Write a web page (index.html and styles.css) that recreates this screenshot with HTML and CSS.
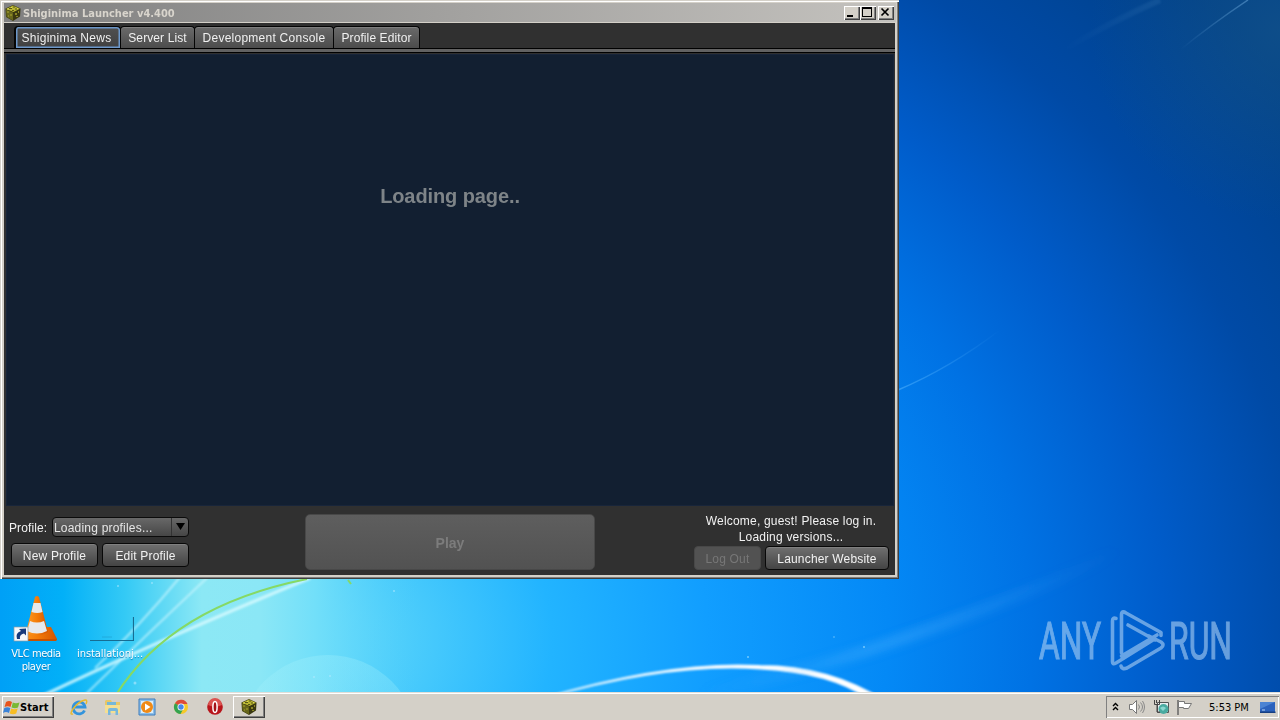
FILE: index.html
```html
<!DOCTYPE html>
<html lang="en">
<head>
<meta charset="utf-8">
<title>Shiginima Launcher v4.400</title>
<link rel="stylesheet" href="styles.css">
</head>
<body>
<svg width="0" height="0" class="defs">
  <defs>
    <symbol id="cube" viewBox="0 0 16 16">
      <path d="M8 0 15.500 3.500 15 11.500 8 16 1 12 .5 3.500z" fill="#3a3810"/>
      <path d="M8 .5 15 3.700 8.500 7 1 4z" fill="#b8b432"/>
      <path d="M1 4.500 8 7.500V15.500L1.500 11.800z" fill="#67661c"/>
      <path d="M4 3h3v1H4zM8 1.500h2v1H8zM10 3.500h2v1h-2zM7 5h2v1H7z" fill="#5a5a18"/>
      <path d="M2 6h2v2H2zM5 9h2v2H5zM3 10h1v2H3zM10 8h2v2h-2zM13 6h1v2h-1zM11 11h2v1h-2z" fill="#8a8724"/>
      <path d="M2 3.500h2v1H2zM6 2h1v1H6zM12 3h1v1h-1z" fill="#dedb50"/>
    </symbol>
  </defs>
</svg>
<main class="desktop">
  <svg class="wallpaper" viewBox="0 0 1280 720">
    <defs>
      <radialGradient id="sky" gradientUnits="userSpaceOnUse" cx="0" cy="0" r="1.200" gradientTransform="translate(300 640) scale(1000 820)">
        <stop offset="0" stop-color="#6fdffa"/><stop offset=".08" stop-color="#50cffb"/>
        <stop offset=".21" stop-color="#22b4ff"/><stop offset=".34" stop-color="#119eff"/>
        <stop offset=".49" stop-color="#0489f6"/><stop offset=".61" stop-color="#0072e4"/>
        <stop offset=".72" stop-color="#005cca"/><stop offset=".84" stop-color="#004aa6"/>
        <stop offset="1" stop-color="#004088"/>
      </radialGradient>
      <linearGradient id="left" gradientUnits="userSpaceOnUse" x1="0" y1="640" x2="420" y2="640">
        <stop offset="0" stop-color="#00a0f6"/><stop offset=".15" stop-color="#02b0f8"/>
        <stop offset=".3" stop-color="#35caf5"/><stop offset=".48" stop-color="#8ce8f5"/>
        <stop offset=".62" stop-color="#8be7f6"/><stop offset=".75" stop-color="#72dff9"/>
        <stop offset="1" stop-color="#48cbfc" stop-opacity="0"/>
      </linearGradient>
      <radialGradient id="corner"><stop offset="0" stop-color="#1b5a8a" stop-opacity=".5"/><stop offset="1" stop-color="#1b5a8a" stop-opacity="0"/></radialGradient>
      <linearGradient id="beam" x1="0" x2="1"><stop offset="0" stop-color="#5ab8ff" stop-opacity="0"/><stop offset=".4" stop-color="#5ab8ff" stop-opacity=".3"/><stop offset="1" stop-color="#5ab8ff" stop-opacity="0"/></linearGradient>
      <linearGradient id="streak" gradientUnits="userSpaceOnUse" x1="900" y1="0" x2="1000" y2="0"><stop offset="0" stop-color="#5ab8ff" stop-opacity=".5"/><stop offset="1" stop-color="#5ab8ff" stop-opacity="0"/></linearGradient>
      <linearGradient id="ray" x1="1" x2="0"><stop offset="0" stop-color="#5e9bd0" stop-opacity=".6"/><stop offset="1" stop-color="#5e9bd0" stop-opacity="0"/></linearGradient>
      <linearGradient id="arc" gradientUnits="userSpaceOnUse" x1="545" y1="0" x2="780" y2="0"><stop offset="0" stop-color="#fff" stop-opacity=".55"/><stop offset="1" stop-color="#fff"/></linearGradient>
      <linearGradient id="bubble" x1="0" y1="0" x2="0" y2="1"><stop offset="0" stop-color="#a6f2fc" stop-opacity=".3"/><stop offset="1" stop-color="#a6f2fc" stop-opacity=".1"/></linearGradient>
      <filter id="soft" x="-20%" y="-50%" width="140%" height="200%"><feGaussianBlur stdDeviation="1"/></filter>
      <filter id="haze" x="-20%" y="-50%" width="140%" height="200%"><feGaussianBlur stdDeviation="5"/></filter>
    </defs>
    <rect width="1280" height="720" fill="url(#sky)"/>
    <rect width="420" height="720" fill="url(#left)"/>
    <circle cx="1280" cy="30" r="190" fill="url(#corner)"/>
    <circle cx="328" cy="745" r="90" fill="url(#bubble)"/>
    <g fill="none" filter="url(#soft)">
      <path d="M310 578Q155 642 42 696" stroke="#d9fbff" stroke-width="3.500" opacity=".8"/>
      <path d="M209 576Q145 636 84 696M181 576Q138 628 95 668" stroke="#d0f8ff" stroke-width="2" opacity=".65"/>
      <path d="M545 698Q670 662 760 668.500Q830 672 868 698L886 702Q830 666 760 666Q670 661 545 697.500z" stroke="url(#arc)" fill="#fff" stroke-width="2"/>
    </g>
    <path d="M307 579Q172 606 116 695" fill="none" stroke="#86d964" stroke-width="2.200"/>
    <path d="M348 580l3 4" stroke="#86d964" stroke-width="2"/>
    <path d="M700 694Q930 645 1120 550" fill="none" stroke="url(#beam)" stroke-width="10" filter="url(#haze)"/>
    <path d="M800 672Q930 630 1070 570" fill="none" stroke="url(#beam)" stroke-width="4" filter="url(#haze)"/>
    <path d="M898 390Q950 368 1000 330" fill="none" stroke="url(#streak)" stroke-width="1.500"/>
    <path d="M1248 0Q1212 24 1180 50" fill="none" stroke="url(#ray)" stroke-width="1.500"/>
    <path d="M1160 0Q1110 22 1060 52" fill="none" stroke="url(#ray)" stroke-width="6" opacity=".25" filter="url(#soft)"/>
    <g fill="#b7eaff" opacity=".6"><circle cx="864" cy="647" r="1"/><circle cx="748" cy="657" r="1"/><circle cx="834" cy="637" r=".8"/><circle cx="314" cy="677" r="1"/><circle cx="330" cy="676" r="1"/><circle cx="118" cy="586" r="1"/><circle cx="152" cy="583" r="1"/><circle cx="135" cy="683" r="1.500"/><circle cx="394" cy="591" r="1"/></g>
    <g class="watermark">
      <text x="1039" y="659" textLength="62" lengthAdjust="spacingAndGlyphs">ANY</text>
      <text x="1169" y="659" textLength="63" lengthAdjust="spacingAndGlyphs">RUN</text>
      <path d="M1116 618.500Q1112.500 617 1112.500 621V662Q1112.500 665 1116 663L1153 640M1121.500 653V615Q1121.500 610 1126 613L1161 632.500V635.500M1128 625 1155 640M1121.500 656 1157 635M1121 666Q1122 670 1127 668L1161 648Q1165 645 1161 642L1149 636"/>
    </g>
  </svg>

  <div class="shortcut vlc">
    <svg width="48" height="48" viewBox="0 0 48 48">
      <defs><linearGradient id="org" x1="0" x2="1"><stop offset="0" stop-color="#ff9c24"/><stop offset=".5" stop-color="#f47c08"/><stop offset="1" stop-color="#d45400"/></linearGradient></defs>
      <path d="M14 32h25l6 12-1 2H8L6 44z" fill="url(#org)"/><path d="M6 44h39l-1 2H7z" fill="#c75200"/>
      <path d="M23 2q2-2 4 0l9 35q-11 7-22 0z" fill="url(#org)"/>
      <path d="M21.500 8h7l2 9q-5 2-11 0zM18 26q7 3 14 0l3 10q-10 5-20 0z" fill="#e7e9ec"/>
      <rect x="2" y="32" width="14" height="14" fill="#f5f8fb" stroke="#8a9aa6" stroke-width=".7"/><path d="M5 44q-2-6 4-8l-2-2 7-.5v7l-2-2q-5 1-4 5.500z" fill="#173a7c"/>
    </svg>
    <span>VLC media<br>player</span>
  </div>
  <div class="shortcut install">
    <svg width="48" height="48" viewBox="0 0 48 48"><path d="M47.500 22V45.500H4" fill="none" stroke="#176d92" stroke-width="1.200"/><path d="M16 42h10" stroke="#1c96c5" opacity=".5"/></svg>
    <span>installationj...</span>
  </div>

  <section class="window">
    <header class="titlebar">
      <svg class="app-icon"><use href="#cube"/></svg>
      <h1>Shiginima Launcher v4.400</h1>
      <div class="controls">
        <button><svg viewBox="0 0 13 11"><path d="M2 8h6v2H2z"/></svg></button>
        <button><svg viewBox="0 0 13 11"><path d="M1 0h10v10H1zM2 2v7h8V2z" fill-rule="evenodd"/></svg></button>
        <button class="close"><svg viewBox="0 0 13 11"><path d="M2.500 1.500l7 7m0-7l-7 7" stroke="#000" stroke-width="1.700"/></svg></button>
      </div>
    </header>
    <nav class="tabs">
      <button class="tab active"><span class="t1">Shiginima News</span></button>
      <button class="tab"><span class="t2">Server List</span></button>
      <button class="tab"><span class="t3">Development Console</span></button>
      <button class="tab"><span class="t4">Profile Editor</span></button>
    </nav>
    <div class="rule"></div>
    <article class="page"><h2>Loading page..</h2></article>
    <footer class="bottom">
      <div class="profiles">
        <div class="row"><label>Profile:</label><div class="combo"><span>Loading profiles...</span><i><svg width="9" height="7"><path d="M0 0h9L4.500 7z"/></svg></i></div></div>
        <div class="row buttons"><button class="btn new">New Profile</button><button class="btn edit">Edit Profile</button></div>
      </div>
      <button class="play">Play</button>
      <div class="account">
        <p class="welcome">Welcome, guest! Please log in.</p>
        <p class="versions">Loading versions...</p>
        <div class="row"><button class="btn logout">Log Out</button><button class="btn site">Launcher Website</button></div>
      </div>
    </footer>
  </section>

  <footer class="taskbar">
    <button class="start">
      <svg width="17" height="17" viewBox="0 0 17 17"><path d="M3 3q3-2 6 0L7.500 8Q5 6.500 1.500 8z" fill="#e8541c"/><path d="M9.800 3.500q3 1.500 6.700 0L15 8.500q-3 1.500-6.500 0z" fill="#79b935"/><path d="M1.300 9q3-1.500 6 0L6 14q-3-2-6 0z" fill="#3a83d8"/><path d="M8.200 9.500q3 1.500 6.500 0l-1.500 5q-3 1.500-6.500 0z" fill="#f7bd23"/></svg>
      <span>Start</span>
    </button>
    <div class="quick">
      <svg viewBox="0 0 18 18"><path d="M14.500 12.500A6 6 0 1 1 15 9H5" fill="none" stroke="#3394dc" stroke-width="2.800"/><path d="M3 16Q-1 17 3 11 9 3 15 2q3-.3 1 4" fill="none" stroke="#e8b92c" stroke-width="1.400"/></svg>
      <svg viewBox="0 0 18 18"><path d="M1 3l1-1h5l1 2h8v11H1z" fill="#e7c768"/><path d="M3 4h9v5H3z" fill="#74b8d8"/><path d="M1 7h15v8H1z" fill="#f5df91"/><path d="M4 17v-5q0-2 2-2h6q2 0 2 2v5h-2.500v-4h-5v4z" fill="#77b7dc"/></svg>
      <svg viewBox="0 0 18 18"><path d="M1 1h16v16H1z" fill="#8cbfe9" stroke="#3c7dbd"/><path d="M3 3h12v12H3z" fill="#dceefa"/><circle cx="9" cy="9" r="6" fill="#f08a15"/><path d="M7 5.500 12.500 9 7 12.500z" fill="#fff"/></svg>
      <svg viewBox="0 0 18 18"><circle cx="9" cy="9" r="7" fill="#f6c928"/><path d="M9 9 3 5.200A7 7 0 0 1 15.500 6H9z" fill="#dd4b39"/><path d="M9 9 3 5.200A7 7 0 0 0 8.500 16l3.300-6z" fill="#34a350"/><circle cx="9" cy="9" r="3.500" fill="#fff"/><circle cx="9" cy="9" r="2.700" fill="#4788e8"/></svg>
      <svg viewBox="0 0 18 18"><circle cx="9" cy="9" r="7.800" fill="#b8151b"/><path d="M2 7a7 7 0 0 1 14 0q-7 3-14 0z" fill="#db5350"/><ellipse cx="9" cy="9" rx="2.100" ry="5.500" fill="#a51216" stroke="#fff" stroke-width="1.500"/></svg>
    </div>
    <div class="task"><svg width="16" height="16"><use href="#cube"/></svg></div>
    <div class="tray">
      <svg class="chev" width="7" height="11" viewBox="0 0 7 11"><path d="M1 4l2.500-2.500L6 4M1 8l2.500-2.500L6 8" fill="none" stroke="#000" stroke-width="1.400"/></svg>
      <svg class="vol" width="18" height="16" viewBox="0 0 18 16"><path d="M1.500 5.500h3l4-4v13l-4-4h-3z" fill="#fff" stroke="#777"/><path d="M10.500 5.500q2 2.500 0 5M12.500 3.500q4 4.500 0 9M14.500 2q4 6 0 12" fill="none" stroke="#888"/></svg>
      <svg class="net" width="17" height="17" viewBox="0 0 17 17"><path d="M4.500 3.500h11v10h-11z" fill="#e9eef0" stroke="#555"/><circle cx="10.500" cy="10" r="5" fill="#49aaa0"/><path d="M7 9q3-3 6 0l-3 3z" fill="#8bd7d0"/><path d="M1.500 1v4.500h5V1M4 5.500V13h3M3.500 1v3" fill="none" stroke="#444"/></svg>
      <svg class="flag" width="17" height="16" viewBox="0 0 17 16"><path d="M2 1v15" stroke="#666" stroke-width="1.500"/><path d="M2.500 2.500h6v2h7l-3 5h-5v-1h-5z" fill="#fff" stroke="#777"/></svg>
      <time>5:53 PM</time>
      <svg class="show" width="16" height="13" viewBox="0 0 16 13"><path d="M0 1h15v10H0z" fill="#2b62bd"/><path d="M0 1h15L0 8z" fill="#4b83d3"/><path d="M0 10.500h15.500V12H0z" fill="#173f82"/><path d="M2 9h3" stroke="#b9d5f2"/></svg>
    </div>
  </footer>
</main>
</body>
</html>
```
FILE: styles.css
```css
* { box-sizing: border-box; }
body { margin: 0; overflow: hidden; font-family: "Liberation Sans", Arial, sans-serif; }
button { font: inherit; color: inherit; padding: 0; margin: 0; border: 0; background: none; }
h1, h2, p { margin: 0; }
svg { display: block; flex: none; }
.defs { position: absolute; }
.desktop { position: relative; width: 1280px; height: 720px; overflow: hidden; display: flex; flex-direction: column; justify-content: flex-end; }
.wallpaper { position: absolute; inset: 0; width: 1280px; height: 720px; }
.watermark { opacity: .62; }
.watermark text { font: 52px Roboto, sans-serif; fill: #a6cdf2; stroke: #a6cdf2; stroke-width: 1.2px; }
.watermark path { fill: none; stroke: #a6cdf2; stroke-width: 3.6; stroke-linejoin: round; stroke-linecap: round; }

.shortcut { position: absolute; width: 76px; display: flex; flex-direction: column; align-items: center; font: 11px/13px "DejaVu Sans Condensed", "DejaVu Sans", sans-serif; font-stretch: condensed; color: #fff; text-align: center; text-shadow: 0 1px 1px #0878b4; white-space: nowrap; letter-spacing: -.4px; }
.shortcut span { margin-top: 4px; }
.vlc { left: -2px; top: 595px; }
.vlc svg { margin-left: -1px; }
.install { left: 72px; top: 595px; letter-spacing: -.05px; }

.window { position: absolute; left: 0; top: 0; width: 899px; height: 579px; padding: 3px 3px 4px 4px; display: flex; flex-direction: column; background: #303030; box-shadow: inset 1px 1px #d4d0c8, inset 2px 2px #fff, inset -1px -1px #404040, inset -2px -2px #808080, inset 4px 3px #d4d0c8, inset -4px -4px #d4d0c8; }
.titlebar { height: 20px; flex: none; display: flex; align-items: center; background: linear-gradient(90deg, #808080, #c4c2be); padding: 0 2px 0 1px; border-bottom: 1px solid #d4d0c8; }
.app-icon { width: 16px; height: 16px; }
.titlebar h1 { margin-left: 2px; flex: 1; font: bold 11px/16px "DejaVu Sans Condensed", "DejaVu Sans", sans-serif; font-stretch: condensed; color: #d8d4cc; padding-top: 2px; }
.controls { display: flex; }
.controls button { width: 16px; height: 14px; background: #d4d0c8; box-shadow: inset 1px 1px #fff, inset -1px -1px #404040, inset -2px -2px #808080; padding: 1px; }
.controls svg { width: 13px; height: 11px; }
.controls .close { margin-left: 2px; }
.tabs { height: 25px; flex: none; display: flex; align-items: flex-end; padding-left: 10px; margin: 0 1px 0 0; }
.tab { height: 22px; padding: 0 7px; border: 1px solid #050505; border-bottom: 0; border-radius: 4px 4px 0 0; background: linear-gradient(#6a6a6a, #4c4c4c); color: #f0f0f0; font-size: 12px; line-height: 20px; margin-right: -1px; box-shadow: inset 0 1px #808080; }
.tab span { display: block; white-space: nowrap; }
.tab.active { background: linear-gradient(#505050, #404040); box-shadow: inset 0 0 0 1.5px #6d98cb; }
.tab.active { padding: 0 8px 0 6px; border-left-width: 2px; padding-left: 5px; }
.t1 { width: 91px; letter-spacing: .28px; }
.t2 { width: 59px; letter-spacing: .1px; }
.t3 { width: 124px; letter-spacing: .25px; }
.t4 { width: 71px; letter-spacing: .1px; }
.rule { height: 5px; margin-right: 1px; flex: none; background: #626262; border-top: 1px solid #000; border-bottom: 1px solid #000; }
.page { height: 452px; margin: 1px 2px 0 2px; flex: none; background: #121f31; box-shadow: inset 0 0 0 1px #18253a; display: flex; justify-content: center; padding-top: 130px; }
.page h2 { font: bold 20px/24px "Liberation Sans", Arial, sans-serif; color: #7e8488; letter-spacing: -.1px; }
.bottom { flex: 1; display: flex; padding: 8px 7px 0 5px; color: #f2f2f2; font-size: 12px; line-height: 14px; }
.row { display: flex; }
.profiles { width: 296px; padding-top: 3px; }
.profiles .row { align-items: center; }
.profiles label { width: 43px; letter-spacing: .1px; padding-top: 2px; }
.combo { width: 137px; height: 20px; border: 1px solid #0b0b0b; border-radius: 4px; background: linear-gradient(#686868, #464646); display: flex; align-items: center; padding-left: 1px; letter-spacing: .2px; }
.combo span { flex: 1; white-space: nowrap; color: #e6e6e6; padding-top: 2px; }
.combo i { width: 17px; height: 18px; border-left: 1px solid #333; padding: 5px 0 0 4px; }
.buttons { margin-top: 6px; padding-left: 2px; gap: 4px; }
.btn { height: 24px; padding-top: 2px; border: 1px solid #080808; border-radius: 4px; background: linear-gradient(#707070, #444); box-shadow: inset 0 1px #808080; letter-spacing: .18px; white-space: nowrap; }
.new, .edit { width: 87px; }
.play { width: 290px; height: 56px; border: 1px solid #484848; border-radius: 5px; background: linear-gradient(#5e5e5e, #525252); color: #7c7c7c; font-weight: bold; font-size: 14px; padding-top: 2px; }
.account { margin-left: auto; width: 196px; }
.account p { text-align: center; height: 16px; letter-spacing: .2px; white-space: nowrap; }
.account .row { gap: 4px; justify-content: flex-end; }
.btn.logout { width: 67px; background: #525252; border-color: #484848; box-shadow: none; color: #777; }
.site { width: 124px; }

.taskbar { position: relative; height: 28px; display: flex; align-items: center; background: #d4d0c8; border-top: 1px solid #e0ded8; box-shadow: inset 0 1px #fff; padding: 1px 0 0 2px; font: 11px/20px "DejaVu Sans Condensed", "DejaVu Sans", sans-serif; font-stretch: condensed; color: #000; }
.start, .task { height: 22px; background: #d4d0c8; box-shadow: inset 1px 1px #fff, inset -1px -1px #404040, inset -2px -2px #808080; display: flex; align-items: center; }
.start { width: 52px; padding-left: 1px; font-weight: bold; letter-spacing: .1px; }
.start span { padding-top: 1px; }
.quick { display: flex; margin-left: 16px; gap: 16px; }
.quick svg { width: 18px; height: 18px; }
.task { width: 32px; margin-left: 9px; justify-content: center; }
.tray { margin-left: auto; width: 173px; height: 22px; margin-right: 1px; box-shadow: inset 1px 1px #808080, inset -1px -1px #fff; display: flex; align-items: center; padding-left: 6px; }
.vol { margin-left: 9px; }
.net { margin-left: 7px; }
.flag { margin-left: 6px; }
.tray time { margin-left: 16px; width: 51px; white-space: nowrap; padding-top: 1px; }
```
